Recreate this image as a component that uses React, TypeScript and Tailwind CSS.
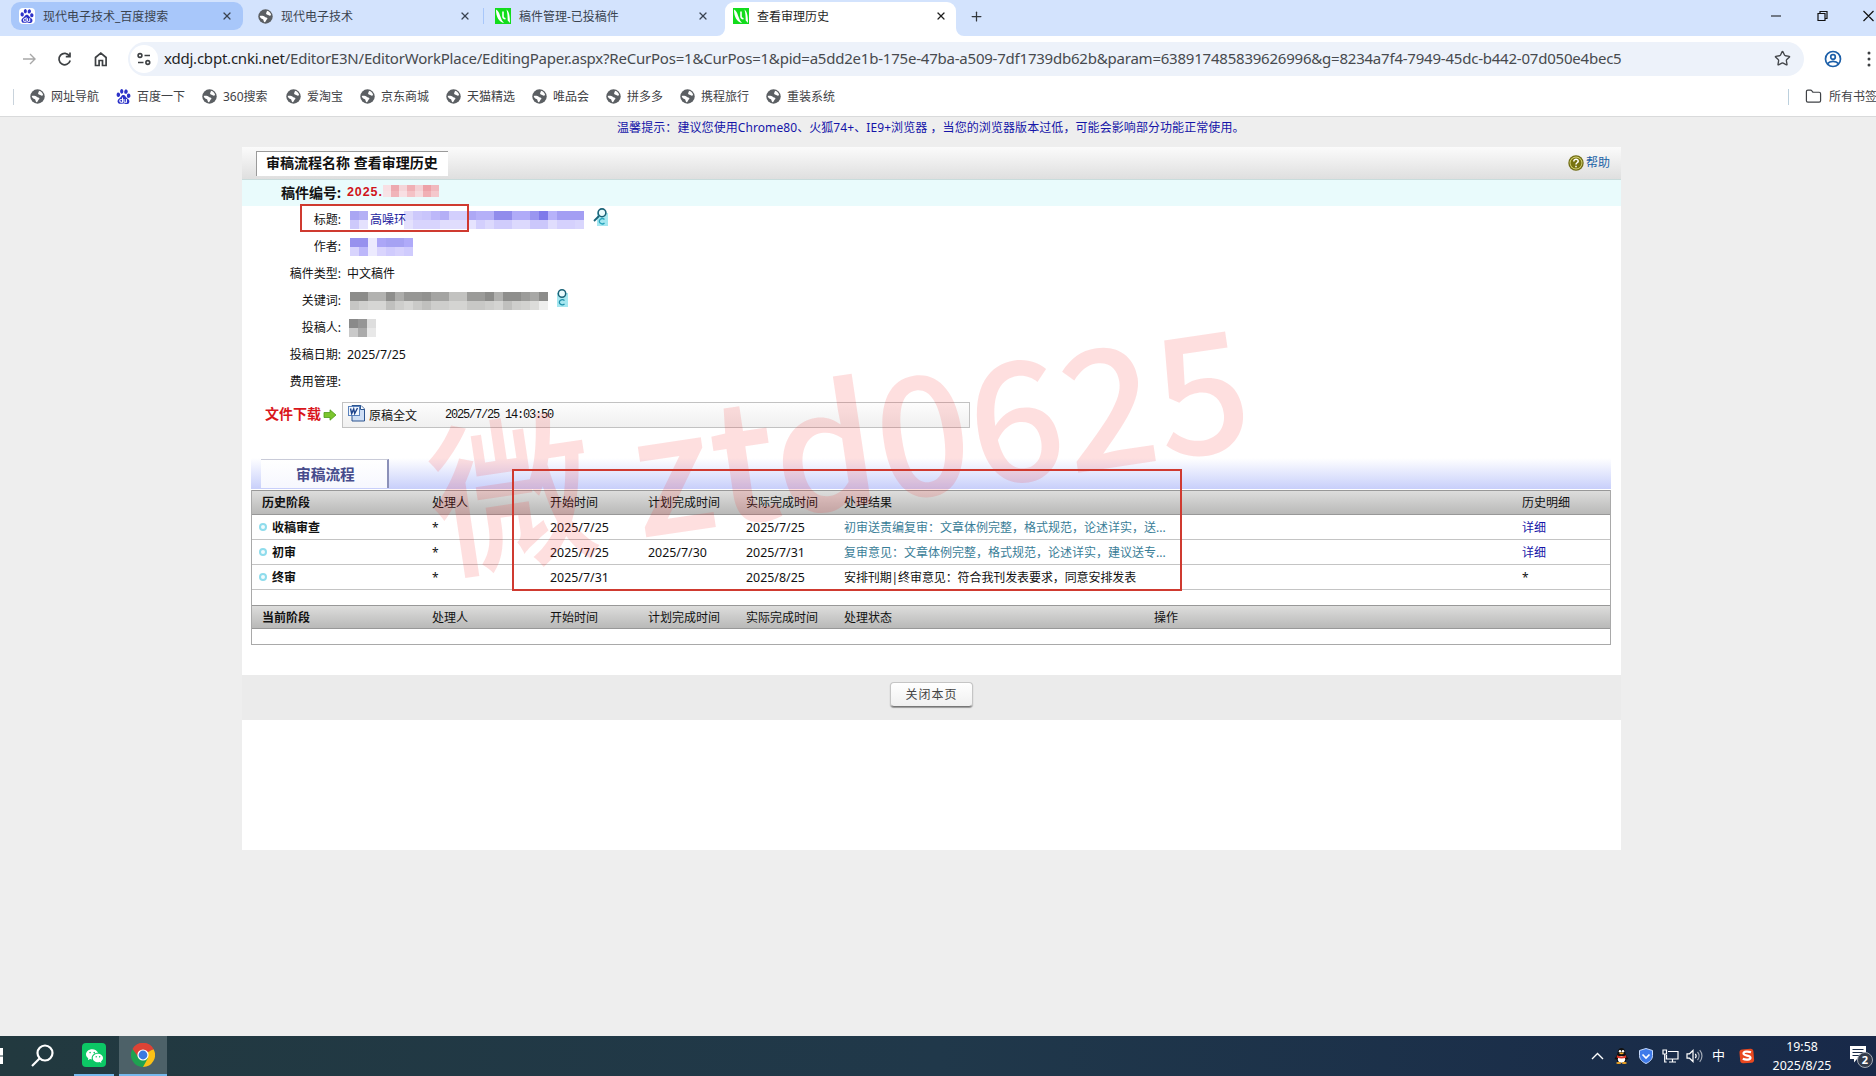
import React from "react";
import { SiBaidu } from "react-icons/si";
import { BsWechat } from "react-icons/bs";
import { Star, Folder, X, Plus } from "lucide-react";

const SANS = "font-['Noto_Sans','Noto_Sans_CJK_SC',sans-serif]";

function Globe({ size = 15 }: { size?: number }) {
  return (
    <svg width={size} height={size} viewBox="0 0 16 16" className="shrink-0">
      <circle cx="8" cy="8" r="7.7" fill="#5b5f63" />
      <path d="M9.5 1.9c2.3.5 4 2.3 4.5 4.5-.8.9-2 .9-2.6.2-.6-.9-1.9-.4-2.6-1.4-.7-1.100.9-1.400.7-3.300z" fill="#fff" />
      <path d="M1.900 7.500c1.500-.6 4.200-.3 5.200.7.900.9 2.500.4 2.900 1.600.3 1.100-.9 1.300-1.200 2.300-.2.900-.8 1.300-1.400 2-1.300-.2-1.500-1.400-1.700-2.600-.3-1-1.700-.9-2.500-1.700-.7-.6-1.200-1.200-1.300-2.300z" fill="#fff" />
    </svg>
  );
}

function CnkiIcon() {
  return (
    <svg width="16" height="16" viewBox="0 0 16 16" className="shrink-0">
      <rect width="16" height="16" fill="#12dc1c" />
      <path d="M1 1.500C3 2.500 4.500 5 5 7.500L7 12.500 9 15C4 14 1 9 1 1.500z" fill="#fff" />
      <path d="M11.500 1.500C13.500 3 15 6 15 15l-2.300-2.500c0-4-.3-7.500-1.200-11z" fill="#fff" />
      <path d="M8 3.500v5c0 1.300.8 2 2.500 2.200" fill="none" stroke="#fff" strokeWidth="1.6" />
    </svg>
  );
}

function Tab({ icon, title, className, dark }: { icon: React.ReactNode; title: string; className: string; dark?: boolean }) {
  return (
    <div className={`flex items-center text-[12px] ${dark ? "text-[#1f1f1f]" : "text-[#3a4350]"} ${className}`}>
      {icon}
      <span className="ml-2 flex-1 whitespace-nowrap pt-px">{title}</span>
      <X size={12} strokeWidth={2.4} />
    </div>
  );
}

const bookmarks: [string, string][] = [
  ["网址导航", "w-[86px]"],
  ["百度一下", "w-[86px]"],
  ["360搜索", "w-[84px]"],
  ["爱淘宝", "w-[74px]"],
  ["京东商城", "w-[86px]"],
  ["天猫精选", "w-[86px]"],
  ["唯品会", "w-[74px]"],
  ["拼多多", "w-[74px]"],
  ["携程旅行", "w-[86px]"],
  ["重装系统", "w-[86px]"],
];

function Browser() {
  return (
    <>
      <div className="relative flex h-9 bg-[#d3e3fd] pl-[11px]">
        <Tab icon={<span className="flex h-4 w-4 items-center justify-center rounded-sm bg-white"><SiBaidu size={14} color="#2c32c8" /></span>} title="现代电子技术_百度搜索" className="mt-[2px] h-[28px] w-[232px] rounded-[9px] bg-[#a8c7fa] pl-[8px] pr-[10px]" />
        <Tab icon={<Globe />} title="现代电子技术" className="mt-[2px] h-[28px] w-[236px] pl-[15px] pr-[8px]" />
        <span className="mt-2 ml-[4px] h-4 w-px bg-[#a8c7fa]" />
        <Tab icon={<CnkiIcon />} title="稿件管理-已投稿件" className="mt-[2px] h-[28px] w-[239px] pl-[11px] pr-[14px]" />
        <div className="relative ml-[2px] flex h-[34px] w-[231px] self-end rounded-t-[9px] bg-white">
          <svg width="8" height="8" className="absolute bottom-0 -left-2"><path d="M8 0v8H0a8 8 0 0 0 8-8z" fill="#fff" /></svg>
          <svg width="8" height="8" className="absolute bottom-0 -right-2"><path d="M0 0v8h8a8 8 0 0 1-8-8z" fill="#fff" /></svg>
          <Tab dark icon={<CnkiIcon />} title="查看审理历史" className="h-[28px] w-full pl-[8px] pr-[9px]" />
        </div>
        <Plus size={15} strokeWidth={2} color="#33373c" className="mt-[9px] ml-[13px]" />
        <div className="ml-auto mt-[10px] flex pr-[2px]">
          <svg width="105" height="12" viewBox="0 0 105 12" fill="none" stroke="#111" strokeWidth="1.2">
            <path d="M2 6h10M49 3.500h7v7h-7zM51 3.500v-2h7v7h-2M94.500 1l10 10M104.500 1l-10 10" />
          </svg>
        </div>
      </div>
      <div className="flex h-[46px] items-center bg-white pb-[1px] pl-[21px]">
        <svg width="96" height="20" viewBox="0 0 96 20" fill="none" strokeWidth="1.7">
          <path d="M2 10h12M9 5l5 5-5 5" stroke="#a8a8a8" strokeWidth="1.4" />
          <path d="M48.500 7a5.700 5.700 0 1 0 .7 4.500M49 3.500v4.200h-4.200" stroke="#3d4043" />
          <path d="M74.500 16.500V8.500l5.300-4.300 5.300 4.300v8h-3.600v-5h-3.400v5z" stroke="#3d4043" />
        </svg>
        <div className="ml-[11px] flex h-[34px] w-[1676px] items-center rounded-full bg-[#edf2fa] pl-[2px]">
          <span className="flex h-7 w-7 shrink-0 items-center justify-center rounded-full bg-white">
            <svg width="14" height="14" viewBox="0 0 14 14" fill="none" stroke="#3d4043" strokeWidth="1.6">
              <circle cx="3" cy="3.5" r="1.9" /><path d="M7.500 3.500H13M1 10.500h5.500" /><circle cx="10.8" cy="10.5" r="1.9" />
            </svg>
          </span>
          <span className="ml-[6px] whitespace-nowrap text-[15px] tracking-[-0.217px] text-[#474a4e]">
            <span className="text-[#1f1f1f]">xddj.cbpt.cnki.net</span>/EditorE3N/EditorWorkPlace/EditingPaper.aspx?ReCurPos=1&amp;CurPos=1&amp;pid=a5dd2e1b-175e-47ba-a509-7df1739db62b&amp;param=638917485839626996&amp;g=8234a7f4-7949-45dc-b442-07d050e4bec5
          </span>
          <Star size={17} strokeWidth={1.9} color="#44474b" className="ml-auto mr-[13px] shrink-0" />
        </div>
        <svg width="18" height="18" viewBox="0 0 18 18" fill="none" stroke="#1c5fa8" strokeWidth="1.7" className="ml-[20px] shrink-0">
          <circle cx="9" cy="9" r="7.5" /><circle cx="9" cy="7" r="2.3" /><path d="M3.500 13.600c2.500-3 8.500-3 11 0" />
        </svg>
        <svg width="4" height="16" viewBox="0 0 4 16" fill="#3d4043" className="ml-[25px] shrink-0"><circle cx="2" cy="2" r="1.5" /><circle cx="2" cy="8" r="1.5" /><circle cx="2" cy="14" r="1.5" /></svg>
      </div>
      <div className="flex h-[35px] items-center overflow-hidden border-b border-[#d9dadb] bg-white pb-[5px] pl-[13px] text-[12px] text-[#3f4246]">
        <span className="mr-[16px] h-4 w-px bg-[#c9d3dc]" />
        {bookmarks.map(([name, width], i) => (
          <span key={name} className={`flex shrink-0 items-center gap-[6px] whitespace-nowrap ${width}`}>
            {i === 1 ? <SiBaidu size={15} color="#2c32c8" className="shrink-0" /> : <Globe />}
            {name}
          </span>
        ))}
        <span className="ml-auto flex w-[88px] shrink-0 items-center whitespace-nowrap">
          <span className="mr-[16px] h-4 w-px shrink-0 bg-[#bcd0dd]" />
          <Folder size={17} strokeWidth={1.7} className="mr-[7px] shrink-0" />
          所有书签
        </span>
      </div>
    </>
  );
}

function Mosaic({ rows, cell = "w-[9px] h-[9px]", className = "" }: { rows: string[][]; cell?: string; className?: string }) {
  return (
    <span className={`flex flex-col ${className}`}>
      {rows.map((r, i) => (
        <span key={i} className="flex">
          {r.map((c, j) => (
            <span key={j} className={cell} style={{ backgroundColor: c }} />
          ))}
        </span>
      ))}
    </span>
  );
}

function SearchC() {
  return (
    <svg width="15" height="18" viewBox="0 0 15 18" className="shrink-0">
      <rect x="4" y="5" width="11" height="13" fill="#a5e7f0" />
      <circle cx="9" cy="4.8" r="3.9" fill="#e9fbfd" stroke="#1b6378" strokeWidth="1.6" />
      <path d="M6 8L1 13" stroke="#1b6378" strokeWidth="1.8" />
      <path d="M11.500 11.500a3 2.600 0 1 0 0 3.500" fill="none" stroke="#2aa5bd" strokeWidth="1.3" />
    </svg>
  );
}

function SearchCSmall() {
  return (
    <svg width="12" height="18" viewBox="0 0 12 18" className="shrink-0">
      <rect x="1" y="4" width="11" height="14" fill="#a5e7f0" />
      <circle cx="6" cy="4.5" r="3.7" fill="#e9fbfd" stroke="#1b6378" strokeWidth="1.5" />
      <path d="M8.500 11.500a3 2.500 0 1 0 0 3.500" fill="none" stroke="#1f90aa" strokeWidth="1.3" />
    </svg>
  );
}

function Field({ label, children }: { label: string; children?: React.ReactNode }) {
  return (
    <div className="flex h-[27px] items-center">
      <span className="w-[99px] shrink-0 text-right">{label}:</span>
      <span className="ml-[6px] flex items-center">{children}</span>
    </div>
  );
}

const titleTop = "#aaa6f3 #b4b0f5 #ffffff #ffffff #ffffff #ffffff #dcd9fb #cdc9fb #c9c5fb #bdb8f9 #b4aff6 #d3cffd #d3cffd #ada8f5 #b5b0f8 #b5b0f8 #918cec #918cec #b0abf8 #b0abf8 #9a96f0 #7f7aea #b7b2fa #a39ef3 #a39ef3 #a39ef3".split(" ");
const titleBottom = "#cdc9fb #e4e1fd #ffffff #ffffff #ffffff #ffffff #e4e1fd #d8d4fd #d8d4fd #d8d4fd #e0ddfd #e0ddfd #e0ddfd #e6e3fe #d3cffd #dcd9fd #d0ccfc #d0ccfc #dcd9fd #dcd9fd #cbc7fb #cbc7fb #e0ddfd #d5d1fd #d5d1fd #d9d6fd".split(" ");
const keyTop = "#8c8c8a #8c8c8a #b2b2b0 #b2b2b0 #8e8e8c #adadab #979795 #979795 #929290 #a4a4a2 #a4a4a2 #c2c2c0 #c2c2c0 #9b9b99 #9b9b99 #8c8c8a #b0b0ae #8e8e8c #8e8e8c #9c9c9a #a8a8a6 #8c8c8a".split(" ");
const keyBottom = "#c6c6c4 #d0d0ce #d6d6d4 #d6d6d4 #c0c0be #cececc #d6d6d4 #cacac8 #c0c0be #cececc #cececc #d4d4d2 #d4d4d2 #c8c8c6 #c8c8c6 #cececc #d4d4d2 #c0c0be #cececc #d2d2d0 #dcdcda #eeeeed".split(" ");

const GRID = "grid grid-cols-[170px_118px_98px_98px_98px_310px_368px_1fr] items-center pl-[10px] whitespace-nowrap";

function HeadRow({ cells, height }: { cells: string[]; height: string }) {
  return (
    <div className={`${GRID} ${height} border-y border-[#989898] bg-linear-to-b from-[#dddddc] to-[#b9b9b8] pt-px`}>
      {cells.map((c, i) => (
        <span key={i} className={i === 0 ? "font-bold" : ""}>{c}</span>
      ))}
    </div>
  );
}

function StageRow({ cells, teal }: { cells: string[]; teal?: boolean }) {
  return (
    <div className={`${GRID} h-[25px] border-b border-[#c4c4c4] pt-px`}>
      {cells.map((c, i) =>
        i === 0 ? (
          <span key={i} className="-ml-[3px] flex items-center gap-[5px] font-bold">
            <span className="-mt-px h-2 w-2 rounded-full border-2 border-[#8fdcec] bg-[#f1fbfd]" />
            {c}
          </span>
        ) : (
          <span
            key={i}
            className={
              i === 5 && teal ? "text-[#397d97]" : i === 5 ? "tracking-[-0.1px]" : i === 7 && teal ? "text-[#1616a8]" : i >= 2 && i <= 4 ? "text-[12.4px]" : ""
            }
          >
            {c}
          </span>
        )
      )}
    </div>
  );
}

function Paper() {
  return (
    <main className="relative ml-[242px] h-[703px] w-[1379px] bg-white text-[12px] leading-[18px] text-[#111]">
      <div className="flex h-[33px] items-start border-b border-[#c9dcdc] bg-linear-to-b from-[#fbfbfb] to-[#dfdfdf] pl-[14px] pt-1">
        <span className="h-[25px] w-[192px] border-l border-t border-[#9a9a9a] bg-white pl-[9px] text-[14px] leading-[21px] font-bold whitespace-nowrap">审稿流程名称 查看审理历史</span>
        <span className="mt-[3px] mr-[11px] ml-auto flex items-center gap-[2px] text-[#1a62a6]">
          <svg width="16" height="16" viewBox="0 0 16 16">
            <circle cx="8" cy="8" r="7.7" fill="#6f6b12" /><circle cx="8" cy="8" r="6.4" fill="#d9d77a" /><circle cx="8" cy="8" r="5.5" fill="#77720f" />
            <path d="M5.800 6.400c0-3 4.600-2.800 4.400 0-.1 1.300-2.200 1.500-2.200 3M8 10.800v1.500" fill="none" stroke="#fff" strokeWidth="1.5" />
          </svg>
          帮助
        </span>
      </div>
      <div className="flex h-[26px] items-center bg-[#e9fbfc]">
        <span className="w-[99px] text-right text-[14px] font-bold">稿件编号:</span>
        <span className="ml-[6px] pb-[2px] font-['Liberation_Sans',sans-serif] text-[12.5px] font-bold tracking-[0.9px] text-[#d0151b]">2025.</span>
        <Mosaic
          cell="w-[8px] h-[6px]"
          className="mb-1"
          rows={["#f8dfe3 #eda9af #f5d5d9 #f0b0b5 #f4d0d4 #eda2a8 #f1b9be".split(" "), "#f7e3e6 #f0b4b9 #f8dfe3 #f4c2c6 #f6dadd #f1b0b5 #f4c8cc".split(" ")]}
        />
      </div>
      <Field label="标题">
        <span className="relative ml-[3px] flex">
          <Mosaic rows={[titleTop, titleBottom]} />
          <span className="absolute top-0 left-[20px] whitespace-nowrap text-[#1d1d9e]">高噪环</span>
        </span>
        <span className="ml-[9px] -mt-[5px]"><SearchC /></span>
      </Field>
      <Field label="作者">
        <Mosaic className="ml-[3px]" rows={["#9791ee #9791ee #eceafe #aca6f7 #a6a2f3 #a6a2f3 #afaaf9".split(" "), "#d8d4fd #bcb7fa #eceafe #d9d4fd #d0cbfd #d6d1fd #cfcbfd".split(" ")]} />
      </Field>
      <Field label="稿件类型">中文稿件</Field>
      <Field label="关键词">
        <Mosaic className="ml-[3px]" rows={[keyTop, keyBottom]} />
        <span className="ml-[8px] -mt-[6px]"><SearchCSmall /></span>
      </Field>
      <Field label="投稿人">
        <Mosaic className="ml-[2px]" rows={["#8a8a8a #969696 #dedede".split(" "), "#c9c9c9 #aaaaaa #e8e8e8".split(" ")]} />
      </Field>
      <Field label="投稿日期"><span className="text-[12.4px]">2025/7/25</span></Field>
      <Field label="费用管理" />

      <div className="mt-[7px] flex h-[26px] items-center pl-[23px]">
        <span className="pb-[2px] text-[14px] font-bold text-[#d9161c]">文件下载</span>
        <svg width="14" height="12" viewBox="0 0 14 12" className="ml-[2px]"><path d="M1 3.500h6V.8L13 6l-6 5.200V8.500H1z" fill="#7cc52e" stroke="#4d9a1c" strokeWidth=".8" /></svg>
        <div className="ml-[5px] flex h-[26px] w-[628px] items-center border border-[#c2c2c2] bg-linear-to-b from-[#fdfdfd] to-[#f0f0f0] pl-[5px]">
          <svg width="17" height="17" viewBox="0 0 17 17" className="-mt-[4px]">
            <path d="M4 .5h9l3.500 3.500v12H4z" fill="#cfdff5" stroke="#2c5590" /><path d="M12.500.5v4h4" fill="#fff" stroke="#2c5590" />
            <rect x=".5" y="1.5" width="11" height="9" fill="#f2f7fd" stroke="#5a82bd" />
            <path d="M2.500 3.500l1.200 5 2-4.500 1 4.500 2.800-5.500" fill="none" stroke="#1e448c" strokeWidth="1.4" />
          </svg>
          <span className="ml-[4px] pt-px">原稿全文</span>
          <span className="ml-[28px] font-['Liberation_Mono',monospace] text-[12px] tracking-[-1.2px]">2025/7/25 14:03:50</span>
        </div>
      </div>

      <div className="mt-[30px] ml-[9px] flex h-[31px] w-[1360px] bg-linear-to-b from-white to-[#c8cffa] pl-[10px] pt-[1px]">
        <span className="h-[29px] w-[128px] border-t border-r-2 border-[#8b90b8] border-t-[#c9cbd8] bg-linear-to-b from-white to-[#f6f7fe] pl-[35px] text-[14.7px] leading-[28px] font-bold text-[#474c8c]">审稿流程</span>
      </div>
      <div className="mt-[1px] ml-[9px] w-[1360px] border-x border-b border-[#a9a9a9]">
        <HeadRow height="h-[25px]" cells={["历史阶段", "处理人", "开始时间", "计划完成时间", "实际完成时间", "处理结果", "", "历史明细"]} />
        <StageRow teal cells={["收稿审查", "*", "2025/7/25", "", "2025/7/25", "初审送责编复审：文章体例完整，格式规范，论述详实，送...", "", "详细"]} />
        <StageRow teal cells={["初审", "*", "2025/7/25", "2025/7/30", "2025/7/31", "复审意见：文章体例完整，格式规范，论述详实，建议送专...", "", "详细"]} />
        <StageRow cells={["终审", "*", "2025/7/31", "", "2025/8/25", "安排刊期|终审意见：符合我刊发表要求，同意安排发表", "", "*"]} />
        <div className="h-[15px]" />
        <HeadRow height="h-[24px]" cells={["当前阶段", "处理人", "开始时间", "计划完成时间", "实际完成时间", "处理状态", "操作"]} />
        <div className="h-[15px]" />
      </div>

      <div className="mt-[30px] flex h-[45px] justify-center bg-[#ebebeb] pt-[7px]">
        <button className="h-[25px] w-[83px] rounded-[4px] border border-[#c5c5c5] border-b-[#777] bg-linear-to-b from-white to-[#f0f0f0] text-[12px] tracking-[1px] text-[#444] shadow-[0_1px_1px_#999]">关闭本页</button>
      </div>

      <div className="absolute top-[57px] left-[58px] h-[28px] w-[169px] border-2 border-[#cf3a30]" />
      <div className="pointer-events-none absolute top-[267px] left-[200px] origin-bottom-left -rotate-[8.5deg] whitespace-pre font-['Noto_Sans_CJK_SC',sans-serif] text-[165px] leading-none font-medium text-[rgba(245,30,30,0.14)]">微 ztd0625</div>
      <div className="absolute top-[322px] left-[270px] h-[122px] w-[670px] border-2 border-[#cf3a30]" />
    </main>
  );
}

function Taskbar() {
  return (
    <footer className="mt-auto flex h-10 shrink-0 items-center bg-linear-to-r from-[#22393f] via-[#20384a] to-[#182949] text-white">
      <svg width="4" height="16" viewBox="0 0 4 16" className="shrink-0"><path d="M0 0h3v7.500H0zM0 8.500h3V16H0z" fill="#fff" /></svg>
      <svg width="24" height="24" viewBox="0 0 24 24" fill="none" stroke="#fff" strokeWidth="2.2" className="ml-[27px]"><circle cx="14" cy="9" r="7.5" /><path d="M8.500 14.500L1 22" /></svg>
      <div className="ml-[19px] flex h-full w-[40px] items-center justify-center border-b-2 border-[#76b9ed]">
        <span className="flex h-6 w-6 items-center justify-center rounded-[4px] bg-[#0cc765]"><BsWechat size={17} /></span>
      </div>
      <div className="ml-[5px] flex h-full w-[48px] items-center justify-center border-b-2 border-[#76b9ed] bg-[#4d6168]">
        <svg width="24" height="24" viewBox="0 0 24 24">
          <path d="M12 12L1.600 6A12 12 0 0 1 22.400 6z" fill="#dd4335" />
          <path d="M12 12h0L22.400 6A12 12 0 0 1 12 24z" fill="#fbc116" />
          <path d="M12 12l5 3-5 9A12 12 0 0 1 1.600 6z" fill="#1fa251" />
          <path d="M12 6.500h10.700a12 12 0 0 0-21.100-.5l5.600 8z" fill="#dd4335" />
          <circle cx="12" cy="12" r="5.6" fill="#fff" /><circle cx="12" cy="12" r="4.4" fill="#3b79e1" />
        </svg>
      </div>
      <div className="ml-auto flex items-center">
        <svg width="13" height="8" viewBox="0 0 13 8" fill="none" stroke="#fff" strokeWidth="1.4"><path d="M1 7l5.500-5.500L12 7" /></svg>
        <svg width="15" height="16" viewBox="0 0 15 16" className="ml-[10px]">
          <path d="M7.500 0C3.500 0 4 4.500 3 7L.5 11l2 .5L4 15h7l1.500-3.500 2-.5L12 7c-1-2.500-.5-7-4.500-7z" fill="#111" />
          <ellipse cx="7.5" cy="11.3" rx="3.6" ry="3.4" fill="#fff" /><path d="M3 7.200c3 1.600 6 1.600 9 0l.3 2.300c-3 1.300-6.500 1.300-9.600 0z" fill="#e0362a" />
          <circle cx="6" cy="3.3" r="1.2" fill="#fff" /><circle cx="9" cy="3.3" r="1.2" fill="#fff" /><ellipse cx="7.5" cy="5.4" rx="2.2" ry=".8" fill="#f4a623" />
          <ellipse cx="4.7" cy="15" rx="2.5" ry="1" fill="#f4a623" /><ellipse cx="10.3" cy="15" rx="2.5" ry="1" fill="#f4a623" />
        </svg>
        <svg width="14" height="16" viewBox="0 0 14 16" className="ml-[10px]"><path d="M7 .5l6.500 2v5c0 4-3 6.500-6.500 8C3.500 14 .5 11.500.5 7.500v-5z" fill="#3f7bea" stroke="#c7dafc" /><path d="M3.500 6.500L7 10l3.500-3.500" fill="none" stroke="#fff" strokeWidth="1.7" /></svg>
        <svg width="17" height="14" viewBox="0 0 17 14" fill="none" stroke="#fff" strokeWidth="1.2" className="ml-[9px]"><path d="M6 2.500h10v7.500H4.500V6M7 13h7M10.500 10v3M1 1h3.500v4H1zM2.700 5v8h2" /></svg>
        <svg width="17" height="14" viewBox="0 0 17 14" fill="none" stroke="#fff" strokeWidth="1.2" className="ml-[7px]"><path d="M1 4.800h2.500L7 1.500v11L3.500 9.200H1zM9.300 4.800c1 1.300 1 3.100 0 4.400" /><path d="M11.500 3c2 2.300 2 5.700 0 8M13.700 1.200c3 3.300 3 8.300 0 11.600" opacity=".6" /></svg>
        <span className="ml-[9px] text-[13px]">中</span>
        <svg width="16" height="16" viewBox="0 0 16 16" className="ml-[14px]"><rect x=".8" y="1" width="14" height="14" rx="3" fill="#e9481f" transform="rotate(-5 8 8)" /><path d="M12 4.300c-3-1-7.500-1-7.500 1.200 0 2.500 7 1.800 7 4.300 0 2.300-5 2.300-7.700 1" fill="none" stroke="#fff" strokeWidth="2.2" /></svg>
        <div className="ml-[17px] flex w-[60px] flex-col items-center text-[12.4px] leading-[19px]"><span>19:58</span><span>2025/8/25</span></div>
        <svg width="26" height="26" viewBox="0 0 26 26" className="ml-[17px] mr-px">
          <path d="M1 3h16v13H8l-3 3.500V16H1z" fill="#fff" /><path d="M3.500 6.500h11M3.500 9.500h11M3.500 12.500h8" stroke="#1a2b48" strokeWidth="1.2" />
          <circle cx="16" cy="17" r="7.5" fill="#333c4c" stroke="#a3a9b3" strokeWidth="1" />
          <text x="16" y="21" textAnchor="middle" fontSize="11" fontWeight="700" fill="#fff">2</text>
        </svg>
      </div>
    </footer>
  );
}

export default function App() {
  return (
    <div className={`flex h-[1076px] w-[1876px] flex-col overflow-hidden bg-[#eeeeee] ${SANS}`}>
      <Browser />
      <p className="h-[30px] pl-[617px] text-[12px] leading-[21px] tracking-[0.08px] whitespace-nowrap text-[#1414a8]">温馨提示：建议您使用Chrome80、火狐74+、IE9+浏览器 ，当您的浏览器版本过低，可能会影响部分功能正常使用。</p>
      <Paper />
      <Taskbar />
    </div>
  );
}
